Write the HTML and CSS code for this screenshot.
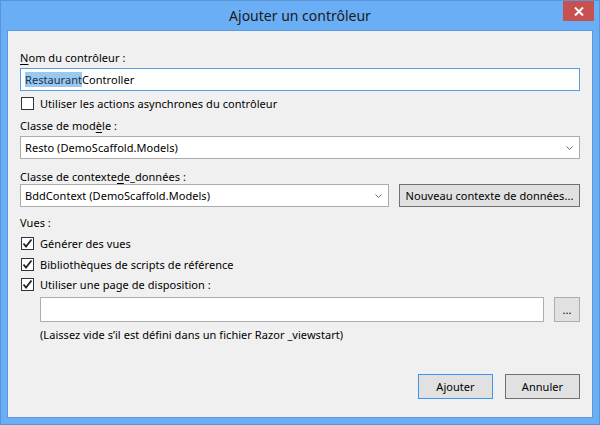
FILE: index.html
```html
<!DOCTYPE html>
<html lang="fr">
<head>
<meta charset="utf-8">
<title>Ajouter un contrôleur</title>
<link rel="stylesheet" href="styles.css">
</head>
<body>
<div class="window">
  <div class="titlebar">
    <div></div>
    <div class="title">Ajouter un contrôleur</div>
    <div class="tb-right">
      <div class="close"><svg width="10" height="9" viewBox="0 0 10 9"><path d="M1 0.5 L9 8.5 M9 0.5 L1 8.5" stroke="#fff" stroke-width="2"/></svg></div>
    </div>
  </div>
  <div class="client">
    <div class="label l-name"><u>N</u>om du contrôleur :</div>
    <div class="textbox focused"><span class="sel">Restaurant</span>Controller</div>
    <div class="check c-async"><span class="box"></span><span>Utiliser les actions asynchrones du contrôleur</span></div>

    <div class="label l-model">Classe de mod<u>è</u>le :</div>
    <div class="combo"><span>Resto (DemoScaffold.Models)</span><svg class="chev" width="7" height="4" viewBox="0 0 7 4"><path d="M0.5 0.5 L3.5 3.5 L6.5 0.5" fill="none" stroke="#707070" stroke-width="1"/></svg></div>

    <div class="label l-ctx">Classe de contexte<u>d</u>e_données :</div>
    <div class="row ctx-row">
      <div class="combo combo-ctx"><span>BddContext (DemoScaffold.Models)</span><svg class="chev" width="7" height="4" viewBox="0 0 7 4"><path d="M0.5 0.5 L3.5 3.5 L6.5 0.5" fill="none" stroke="#707070" stroke-width="1"/></svg></div>
      <div class="btn btn-new">Nouveau contexte de données...</div>
    </div>

    <div class="label l-views">Vues :</div>
    <div class="check c-v1"><span class="box"><svg width="11" height="11" viewBox="0 0 11 11"><path d="M1.5 5.5 L4 8.5 L9.5 1.5" fill="none" stroke="#222" stroke-width="1.8"/></svg></span><span>Générer des vues</span></div>
    <div class="check c-v2"><span class="box"><svg width="11" height="11" viewBox="0 0 11 11"><path d="M1.5 5.5 L4 8.5 L9.5 1.5" fill="none" stroke="#222" stroke-width="1.8"/></svg></span><span>Bibliothèques de scripts de référence</span></div>
    <div class="check c-v3"><span class="box"><svg width="11" height="11" viewBox="0 0 11 11"><path d="M1.5 5.5 L4 8.5 L9.5 1.5" fill="none" stroke="#222" stroke-width="1.8"/></svg></span><span>Utiliser une page de disposition :</span></div>

    <div class="row layout-row">
      <div class="textbox tb-layout"></div>
      <div class="btn btn-browse">...</div>
    </div>
    <div class="hint">(Laissez vide s’il est défini dans un fichier Razor _viewstart)</div>

    <div class="row actions">
      <div class="btn btn-ok">Ajouter</div>
      <div class="btn btn-cancel">Annuler</div>
    </div>
  </div>
</div>
</body>
</html>
```
FILE: styles.css
```css
* { box-sizing: border-box; }
html, body { margin: 0; padding: 0; }
body {
  width: 600px;
  height: 425px;
  font-family: "Noto Sans", "Open Sans", sans-serif;
  font-size: 11px;
  letter-spacing: 0.05px;
  color: #000;
  overflow: hidden;
}
.window {
  width: 600px;
  height: 425px;
  background: #6aaef6;
  border: 1px solid #5a94d6;
  padding: 0 6px 6px 6px;
  display: flex;
  flex-direction: column;
}
.titlebar {
  height: 29px;
  display: grid;
  grid-template-columns: 1fr auto 1fr;
  align-items: start;
  margin: 0 -6px;
}
.title {
  font-size: 14px;
  line-height: 30px;
  color: #1a1a1a;
  letter-spacing: 0;
}
.tb-right {
  display: flex;
  justify-content: flex-end;
  padding-right: 5px;
}
.close {
  width: 31px;
  height: 20px;
  background: #c75050;
  display: flex;
  align-items: center;
  justify-content: center;
}
.client {
  flex: 1;
  background: #f0f0f0;
  border: 1px solid #5b98dc;
  padding: 0 12px 0 12px;
  display: flex;
  flex-direction: column;
}
.label {
  line-height: 15px;
  height: 15px;
  white-space: nowrap;
}
.label u { text-decoration-thickness: 1px; text-underline-offset: 2px; }
.l-name { margin-top: 19px; }
.textbox {
  height: 23px;
  background: #fff;
  border: 1px solid #abadb3;
  line-height: 21px;
  padding-left: 4px;
  white-space: nowrap;
}
.textbox.focused {
  margin-top: 3px;
  border-color: #569de5;
}
.sel {
  background: #99c9ef;
  color: #1c2f53;
}
.check {
  display: flex;
  align-items: center;
  height: 15px;
  line-height: 15px;
  white-space: nowrap;
  padding-left: 1px;
}
.check .box {
  width: 13px;
  height: 13px;
  border: 1px solid #333;
  background: #fff;
  margin-right: 6px;
  display: flex;
  align-items: center;
  justify-content: center;
  flex: none;
}
.c-async { margin-top: 5px; }
.l-model { margin-top: 7px; }
.combo {
  height: 23px;
  background: #fff;
  border: 1px solid #acacac;
  display: flex;
  align-items: center;
  justify-content: space-between;
  padding: 0 6px 0 4px;
  white-space: nowrap;
  margin-top: 3px;
}
.chev { flex: none; }
.l-ctx { margin-top: 10px; }
.row { display: flex; }
.ctx-row { margin-top: 0px; gap: 10px; }
.combo-ctx { width: 369px; margin-top: 0; }
.btn {
  height: 23px;
  background: #e1e1e1;
  border: 1px solid #adadad;
  display: flex;
  align-items: center;
  justify-content: center;
  white-space: nowrap;
}
.btn-new { flex: 1; border-color: #707070; }
.l-views { margin-top: 8px; }
.c-v1 { margin-top: 6px; }
.c-v2 { margin-top: 6px; }
.c-v3 { margin-top: 5px; }
.layout-row { margin-top: 5px; padding-left: 20px; gap: 10px; }
.tb-layout { width: 504px; height: 25px; }
.btn-browse { flex: 1; height: 25px; border-color: #adadad; }
.hint { margin-top: 5px; padding-left: 20px; line-height: 15px; white-space: nowrap; }
.actions { margin-top: 32px; justify-content: flex-end; gap: 12px; }
.btn-ok, .btn-cancel { width: 75px; height: 25px; }
.btn-ok { border-color: #3c97ec; }
.btn-cancel { border-color: #707070; }
```
